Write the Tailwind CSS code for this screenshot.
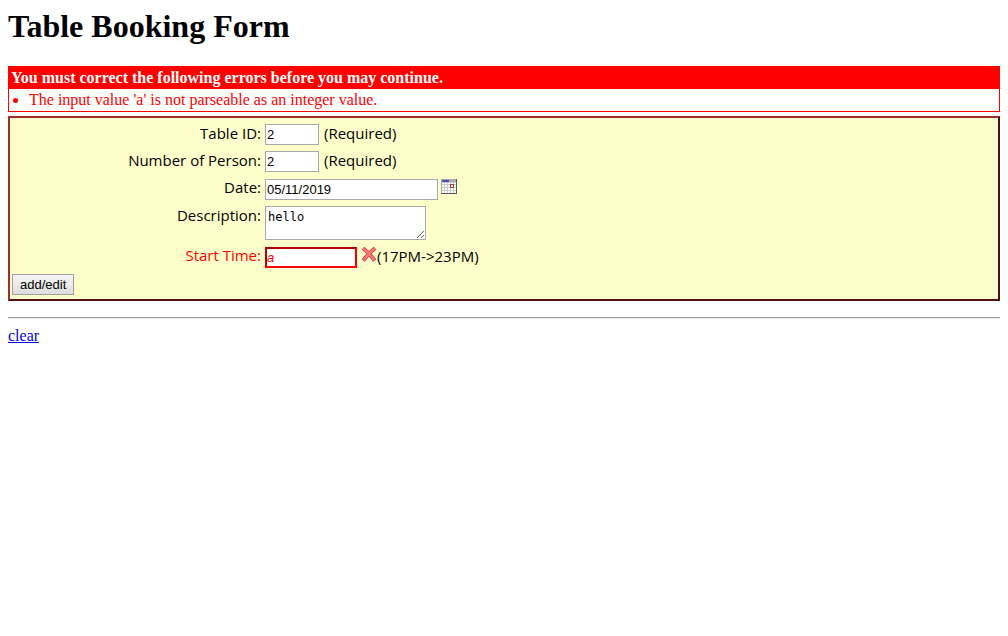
<!DOCTYPE html>
<html lang="en">
<head>
<meta charset="utf-8">
<title>Table Booking Form</title>
<script src="https://cdn.jsdelivr.net/npm/@tailwindcss/browser@4"></script>
</head>
<body class="bg-white px-2 pt-2 font-['Liberation_Serif',serif] text-base leading-[18px] text-black">
<h1 class="mb-[21px] text-[32px] leading-[37px] font-bold">Table Booking Form</h1>

<section class="mb-1 border border-[#f00] text-[#f00]">
  <h2 class="bg-[#f00] px-0.5 pt-0.5 pb-0.5 font-bold text-white">You must correct the following errors before you may continue.</h2>
  <ul class="list-disc py-0.5 pl-5">
    <li>The input value 'a' is not parseable as an integer value.</li>
  </ul>
</section>

<form class="border-2 border-t-[#a52a2a] border-l-[#a52a2a] border-r-[#4d0f0f] border-b-[#4d0f0f] bg-[#ffffcc] px-0.5 pt-1.5 pb-1 font-['Trebuchet_MS','Open_Sans',sans-serif] text-[15px] leading-[18px]">
  <div class="grid grid-cols-[249px_1fr] gap-x-1 gap-y-1.5">
    <label for="table" class="text-right">Table ID:</label>
    <div class="flex items-start gap-[5px]">
      <input id="table" value="2" class="h-[21px] w-[54px] border border-[#a9a9a9] bg-white px-px font-['Liberation_Sans',sans-serif] text-[13px]">
      <span>(Required)</span>
    </div>
    <label for="persons" class="text-right">Number of Person:</label>
    <div class="flex items-start gap-[5px]">
      <input id="persons" value="2" class="h-[21px] w-[54px] border border-[#a9a9a9] bg-white px-px font-['Liberation_Sans',sans-serif] text-[13px]">
      <span>(Required)</span>
    </div>
    <label for="date" class="text-right">Date:</label>
    <div class="flex items-start gap-[3px] pt-px">
      <input id="date" value="05/11/2019" class="h-[21px] w-[173px] border border-[#a9a9a9] bg-white px-px font-['Liberation_Sans',sans-serif] text-[13px]">
      <button type="button" aria-label="Pick a date">
        <svg class="block" width="16" height="15" viewBox="0 0 16 15" shape-rendering="crispEdges">
          <rect width="16" height="15" fill="#aaa"/>
          <path d="M1 1h7v2H1z" fill="#4a4ab5"/>
          <rect x="1" y="3" width="14" height="11" fill="#ccc"/>
          <path d="M1 4h2v1H1zM4 4h2v1H4zM7 4h2v1H7zM10 4h2v1h-2zM13 4h2v1h-2zM1 6h2v2H1zM4 6h2v2H4zM7 6h2v2H7zM13 6h2v2h-2zM1 9h2v2H1zM4 9h2v2H4zM7 9h2v2H7zM10 9h2v2h-2zM13 9h2v2h-2zM1 12h2v2H1zM4 12h2v2H4zM7 12h2v2H7zM10 12h2v2h-2zM13 12h2v2h-2z" fill="#fff"/>
          <path d="M15 0h1v15H0v-1h15z" fill="#555"/>
          <rect x="9.500" y="5.500" width="3" height="3" fill="#fff" stroke="#b33a3a"/>
        </svg>
      </button>
    </div>
    <label for="description" class="text-right">Description:</label>
    <textarea id="description" class="block h-[34px] w-[161px] border border-[#a9a9a9] bg-white p-0.5 font-['DejaVu_Sans_Mono',monospace] text-xs leading-4">hello</textarea>
    <label for="start" class="text-right text-[#f00]">Start Time:</label>
    <div class="flex items-start pt-px">
      <input id="start" value="a" aria-invalid="true" class="mr-1 h-[21px] w-[92px] border-2 border-t-[#b20000] border-l-[#b20000] border-r-[#f00] border-b-[#f00] bg-white font-['Liberation_Sans',sans-serif] text-[13px] text-[#f00] italic">
      <svg width="16" height="16" viewBox="0 0 16 16" fill="none">
        <path d="M3.500 2.500Q8 6 12.500 12M12.500 2.500Q8 6 3.500 12" stroke="#cf4343" stroke-width="4" stroke-linecap="square"/>
        <path d="M3.500 2.500Q8 6 12.500 12M12.500 2.500Q8 6 3.500 12" stroke="#fa7777" stroke-width="2.500" stroke-linecap="square"/>
      </svg>
      <span>(17PM-&gt;23PM)</span>
    </div>
  </div>
  <button type="submit" class="mt-1.5 block h-[21px] border border-[#a0a0a0] bg-linear-to-b from-[#f6f6f6] to-[#dedede] px-[7px] font-['Liberation_Sans',sans-serif] text-[13px] leading-[19px]">add/edit</button>
</form>

<hr class="mt-4 mb-2 h-0.5 border-t border-b border-t-[#9a9a9a] border-b-[#eee]">
<a href="#" class="text-[#0000ee] underline">clear</a>
</body>
</html>
